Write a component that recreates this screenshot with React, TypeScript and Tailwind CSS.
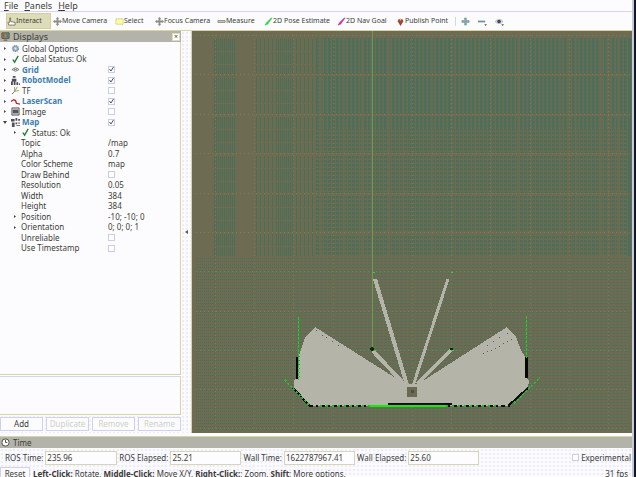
import type { ReactNode } from "react";

const xs = [215, 254, 293, 333, 412, 451, 490, 530, 569, 608];
const ys = [35, 74, 114, 153, 193, 232, 271, 311, 350, 389, 428];
const seams = [320, 343, 361, 388, 402, 431, 451, 474, 490, 517, 530, 559, 568, 575, 600, 608, 617];

function MapView() {
  return (
    <svg viewBox="192 31 440 402" preserveAspectRatio="xMidYMid slice" shapeRendering="crispEdges" className="absolute inset-0 h-full w-full" role="img" aria-label="Map view">
      <defs>
        <pattern id="fine" width="2" height="13" patternUnits="userSpaceOnUse"><path d="M0 0h1v12H0z" fill="#4b6e58" /></pattern>
        <pattern id="wide" width="4" height="13" patternUnits="userSpaceOnUse"><path d="M0 0h1v12H0z" fill="#45705a" /></pattern>
        <pattern id="dense" width="4" height="4" patternUnits="userSpaceOnUse"><path d="M0 0h2v4H0zM2 1h1v2H2z" fill="#4a6f5a" /></pattern>
        <pattern id="weave" width="4" height="4" patternUnits="userSpaceOnUse"><path d="M0 0h3v2H0zM0 2h1v1H0zM2 2h1v1H2z" fill="#4c6f5a" /></pattern>
        <pattern id="dots" width="2" height="3" patternUnits="userSpaceOnUse"><path d="M0 0h1v1H0z" fill="#45705a" /></pattern>
        <pattern id="dash" width="4" height="3" patternUnits="userSpaceOnUse"><path d="M0 0h3v1H0z" fill="#50705a" /></pattern>
      </defs>
      <path d="M192 31h440v402H192z" fill="#6d6b51" />
      <path d="M214 38h22v218h-22zM276 38h18v218h-18z" fill="url(#fine)" />
      <path d="M256 38h20v218h-20zM294 38h22v218h-22z" fill="url(#wide)" />
      <path d="M316 38h314v92H316z" fill="url(#dense)" />
      <path d="M316 130h314v126H316z" fill="url(#weave)" />
      <path d="M628 38h3v218h-3z" fill="#4a6f5a" />
      <path d="M196 256h100v175H196z" fill="url(#dots)" />
      <path d="M296 256h334v175H296z" fill="url(#dash)" />
      {seams.map((x) => <path key={x} d={`M${x} 38h2v218h-2z`} fill="#6d6b51" fillOpacity=".75" />)}
      {ys.slice(1, 6).map((y) => <path key={y} d={`M196 ${y}h434v2H196z`} fill="#6f6b51" />)}
      {xs.map((x) => <path key={x} d={`M${x + 0.5} 35V428`} stroke="#80824f" strokeOpacity=".7" strokeDasharray="1 3" />)}
      {ys.map((y) => <path key={y} d={`M196 ${y + 0.5}H628`} stroke="#7f8650" strokeOpacity=".8" strokeDasharray="1 3" />)}
      <path d="M372.500 31V350" stroke="#719a4c" />
      <path d="M315 327L305 337L301 350L299 356L298 378L294 380V388L309 406H508L528 388L529 380L526 378L525 357L521 350L516 337L507 327L418 384H405Z" fill="#b4b4a9" />
      <path d="M398 376L406 386H419L424 377L413 382Z" fill="#6d6b51" />
      <g stroke="#b4b4a9" fill="none">
        <path d="M375 279L407 385" strokeWidth="4" />
        <path d="M448 279L413 386" strokeWidth="3" />
        <path d="M373 351L404 384M451 350L417 384" strokeWidth="4" />
      </g>
      <path d="M400 384h25v4h-25z" fill="#b4b4a9" />
      <path d="M407 387h10v10h-10z" fill="#6b6a51" /><path d="M411 390h3v3h-3z" fill="#4d4d55" />
      <path d="M296 357h2v22h-2zM525 357h3v21h-3z" fill="#050805" />
      <path d="M298.500 317V380M526.500 316V358" stroke="#1bcf2a" strokeDasharray="3 1" />
      <path d="M299.500 320V378M525.500 322V356" stroke="#3a9440" strokeDasharray="1 3" />
      <path d="M293 388L310 406M508 406L528 388" stroke="#061006" strokeWidth="2" />
      <path d="M285 380L309 405M514 403L540 378" stroke="#20c432" strokeWidth="1.500" strokeDasharray="2 2" />
      <path d="M309 406H510" stroke="#071307" strokeWidth="2" strokeDasharray="4 3 2 3" />
      <path d="M320 406H500" stroke="#16bd20" strokeWidth="2" strokeDasharray="2 4" />
      <path d="M388 403h64v2h-64z" fill="#080a08" /><path d="M370 406h76" stroke="#05f500" strokeWidth="2" />
      <path d="M371 347h2v4h-2zM370 348h4v2h-4zM450 348h3v2h-3z" fill="#052d0c" />
      <path d="M373 272h2v1h-2zM451 272h2v1h-2zM451 350h3v1h-3zM374 350h2v1h-2z" fill="#35d43d" />
      <path d="M316 330.500h1M322 335.500h1M326 337.500h1M332 341.500h1M338 345.500h1M487 345.500h1M493 341.500h1M499 337.500h1M507 333.500h1M483 353.500h1M487 351.500h1M491 350.500h1M495 348.500h1M499 346.500h1M503 343.500h1M507 341.500h1M511 339.500h1" stroke="#5b5b70" />
    </svg>
  );
}

type IconName = "hand" | "move" | "select" | "ruler" | "green" | "pink" | "pin" | "gear" | "check" | "grid" | "robot" | "tf" | "laser" | "image" | "map" | "plus" | "minus" | "eye" | "screen" | "clock";
const art: Record<IconName, ReactNode> = {
  hand: <path d="M2 9L1 6h2V1h1v4l5 1v3z" fill="#fff" stroke="#77775f" />,
  move: <path d="M5 0L7 2H6V4H8V3l2 2-2 2V6H6v2h1L5 10 3 8h1V6H2v1L0 5l2-2v1h2V2H3z" fill="#8e8e84" />,
  select: <path d="M1 2h8v6H1z" fill="#ffff9a" stroke="#a9a96c" strokeDasharray="1 1" />,
  ruler: <path d="M1 4h8v2H1z" fill="#d9d9c4" stroke="#85857b" />,
  green: <path d="M1 9L3 6 8 1h1L4 8z" fill="#22e534" stroke="#32b942" strokeWidth=".5" />,
  pink: <path d="M1 9L3 6 8 1h1L4 8z" fill="#ea20b9" stroke="#9b3182" strokeWidth=".5" />,
  pin: <><path d="M5 10L2 5a3 3 0 1 1 6 0z" fill="#a34330" /><circle cx="5" cy="3" r="1" fill="#e4c3a8" /></>,
  gear: <><circle cx="5" cy="5" r="3" fill="#a3bacb" stroke="#7d98aa" strokeWidth="2" strokeDasharray="1.500 .5" /><circle cx="5" cy="5" r="1" fill="#e7eef4" /></>,
  check: <path d="M2 5l2 3 4-7" fill="none" stroke="#247d2d" strokeWidth="1.500" />,
  grid: <path d="M1 5l4-2 4 2-4 2zM3 4l4 2M7 4L3 6" fill="none" stroke="#77776f" />,
  robot: <path d="M2 0h3v2H2zM1 3h5v3H1zM0 6h2v4H0zM3 6h2v4H3zM6 7h2v3H6zM9 8h1v2H9z" fill="#4c4c55" />,
  tf: <><path d="M4 6V1M4 6l5-1" stroke="#a3a443" /><path d="M4 6L1 9" stroke="#b64040" /><path d="M4 6l3-5" stroke="#6f9863" /></>,
  laser: <path d="M0 5l3-2 2 1 1 3 4 1" fill="none" stroke="#bd2027" strokeWidth="1.500" />,
  image: <><path d="M1 1h8v8H1z" fill="#d2d2c4" stroke="#55554d" /><path d="M2 3h6v4H2z" fill="#54546a" /></>,
  map: <path d="M0 1h4v3H0zM5 0h2v3H5zM1 5h3v5H1zM5 5h2v2H5zM8 1h2v2H8zM6 8h4v1H6zM8 5h2v1H8z" fill="#50505a" />,
  plus: <path d="M4 1h2v3h3v2H6v3H4V6H1V4h3z" fill="#8cabb1" stroke="#5b7d85" strokeWidth=".5" />,
  minus: <><path d="M0 4h8v2H0z" fill="#6a979f" /><path d="M7 8h3L8.500 10z" fill="#55554d" /></>,
  eye: <><path d="M0 5q5-5 9 0q-4 5-9 0" fill="#d5d7e5" stroke="#9999aa" strokeWidth=".5" /><circle cx="4.500" cy="5" r="2" fill="#454556" /><path d="M7 8h3L8.500 10z" fill="#55554d" /></>,
  screen: <><path d="M1 1h8v6H1z" fill="#78a05a" stroke="#48483c" /><path d="M2 2h2v4H2z" fill="#c64b45" /><path d="M6 2h2v4H6z" fill="#596fae" /><path d="M3 9h4" stroke="#48483c" /></>,
  clock: <><circle cx="5" cy="5" r="4" fill="#fff" stroke="#45453f" /><path d="M5 2v3h2" fill="none" stroke="#45453f" /></>,
};
function Icon({ name }: { name: IconName }) {
  return <svg viewBox="0 0 10 10" className="size-[9px] shrink-0" aria-hidden="true">{art[name]}</svg>;
}

const tools: { icon: IconName; label: string; box: string }[] = [
  { icon: "hand", label: "Interact", box: "w-[45px]" },
  { icon: "move", label: "Move Camera", box: "w-[60px]" },
  { icon: "select", label: "Select", box: "w-[38px]" },
  { icon: "move", label: "Focus Camera", box: "w-[60px]" },
  { icon: "ruler", label: "Measure", box: "w-[45px]" },
  { icon: "green", label: "2D Pose Estimate", box: "w-[71px]" },
  { icon: "pink", label: "2D Nav Goal", box: "w-[57px]" },
  { icon: "pin", label: "Publish Point", box: "w-[57px]" },
];

type Row = { label: string; icon?: IconName; value?: string; check?: boolean; strong?: boolean; arrow?: "right" | "down"; child?: boolean };
const rows: Row[] = [
  { label: "Global Options", icon: "gear", arrow: "right" },
  { label: "Global Status: Ok", icon: "check", arrow: "right" },
  { label: "Grid", icon: "grid", arrow: "right", check: true, strong: true },
  { label: "RobotModel", icon: "robot", arrow: "right", check: true, strong: true },
  { label: "TF", icon: "tf", arrow: "right", check: false },
  { label: "LaserScan", icon: "laser", arrow: "right", check: true, strong: true },
  { label: "Image", icon: "image", arrow: "right", check: false },
  { label: "Map", icon: "map", arrow: "down", check: true, strong: true },
  { label: "Status: Ok", icon: "check", arrow: "right", child: true },
  { label: "Topic", value: "/map", child: true },
  { label: "Alpha", value: "0.7", child: true },
  { label: "Color Scheme", value: "map", child: true },
  { label: "Draw Behind", check: false, child: true },
  { label: "Resolution", value: "0.05", child: true },
  { label: "Width", value: "384", child: true },
  { label: "Height", value: "384", child: true },
  { label: "Position", value: "-10; -10; 0", arrow: "right", child: true },
  { label: "Orientation", value: "0; 0; 0; 1", arrow: "right", child: true },
  { label: "Unreliable", check: false, child: true },
  { label: "Use Timestamp", check: false, child: true },
];

function Tick({ label, on }: { label: string; on: boolean }) {
  return (
    <span className="relative grid size-[7px] shrink-0">
      <input id={label} type="checkbox" aria-label={label} defaultChecked={on} className="peer size-[7px] appearance-none border border-[#cbcbed] bg-white" />
      <svg viewBox="0 0 7 7" className="pointer-events-none absolute inset-0 hidden size-[7px] peer-checked:block" aria-hidden="true"><path d="M1.500 3l1.500 2 2.500-4" fill="none" stroke="#3e5a66" /></svg>
    </span>
  );
}

function PropertyRow({ row }: { row: Row }) {
  return (
    <li className="flex h-[11px] items-center even:h-[10px]">
      <div className={row.child ? "flex w-[108px] shrink-0 items-center pl-[12px]" : "flex w-[108px] shrink-0 items-center pl-[2px]"}>
        <span className="flex w-[9px] shrink-0 justify-start">
          {row.arrow && <svg viewBox="0 0 5 5" className="size-[5px]" aria-hidden="true"><path d={row.arrow === "down" ? "M1 1h4L3 4z" : "M2 1L4 2.500 2 4z"} fill="#44443d" /></svg>}
        </span>
        {row.icon && <span className="flex w-[11px] shrink-0"><Icon name={row.icon} /></span>}
        <span className={row.strong ? "font-bold text-[#3f80ad]" : ""}>{row.label}</span>
      </div>
      {row.value && <span>{row.value}</span>}
      {row.check !== undefined && <Tick label={row.label} on={row.check} />}
    </li>
  );
}

const times = [
  { label: "ROS Time:", value: "235.96", w: "w-[72px]" },
  { label: "ROS Elapsed:", value: "25.21", w: "w-[71px]" },
  { label: "Wall Time:", value: "1622787967.41", w: "w-[71px]" },
  { label: "Wall Elapsed:", value: "25.60", w: "w-[71px]" },
];
const dotted = "bg-[#fbfbff] bg-[radial-gradient(#ececfc_1px,transparent_1px)] bg-[size:4px_4px]";

export default function App() {
  return (
    <div className="flex h-screen overflow-hidden bg-[#fcfcff] font-['Noto_Sans',sans-serif] text-[8px] leading-[10px] whitespace-nowrap text-[#3c3c36]">
      <div className="flex min-w-0 flex-1 flex-col">
        <nav className="flex h-[12px] shrink-0 items-center gap-[6px] border-b border-[#d4d4fa] pl-[4px] text-[9px]">
          {["File", "Panels", "Help"].map((m) => <button key={m}><u>{m[0]}</u>{m.slice(1)}</button>)}
        </nav>
        <div className="flex h-[19px] shrink-0 items-center border-b border-[#d8d5a4] pl-[6px] text-[7px]">
          <div className="flex items-center gap-[2px]">
            {tools.map((t, i) => <button key={t.label} className={`${t.box} flex h-[16px] items-center ${i === 0 ? "border border-[#d3cf9c] bg-[#dedcb8]" : ""}`}><Icon name={t.icon} />{t.label}</button>)}
          </div>
          <div className="ml-[2px] flex items-center gap-[8px] border-l border-[#d5d5e8] pl-[5px]">
            <button aria-label="Add tool"><Icon name="plus" /></button>
            <button aria-label="Remove tool"><Icon name="minus" /></button>
            <button aria-label="Tool visibility"><Icon name="eye" /></button>
          </div>
        </div>
        <div className="flex min-h-0 flex-1">
          <aside className="flex w-[181px] shrink-0 flex-col">
            <header className="flex h-[11px] shrink-0 items-center gap-[3px] bg-[#b3b3a9] pr-[1px] pl-[1px] text-[9px]">
              <Icon name="screen" /><h2 className="flex-1">Displays</h2>
              <button aria-label="Close" className="grid size-[8px] place-items-center border border-[#dedcb8] bg-white text-[7px] leading-[6px]">×</button>
            </header>
            <ul className="min-h-0 flex-1 border-r border-b border-[#d8d5a4] pt-[1px]">{rows.map((r) => <PropertyRow key={r.label} row={r} />)}</ul>
            <div className="mt-[1px] h-[39px] shrink-0 border border-[#d8d5a4] border-t-[#d4d4fa] border-l-0" />
            <div className={`flex h-[18px] shrink-0 items-center gap-[3px] ${dotted}`}>
              {["Add", "Duplicate", "Remove", "Rename"].map((b, i) => <button key={b} disabled={i > 0} className="h-[14px] flex-1 border border-[#d0d0f0] bg-[#fcfcff] disabled:text-[#cfcfc4]">{b}</button>)}
            </div>
          </aside>
          <div className={`flex w-[11px] shrink-0 items-center justify-center border-r border-[#d8d5a4] ${dotted}`}><svg viewBox="0 0 4 6" className="w-[4px]" aria-hidden="true"><path d="M4 1v4L1 3z" fill="#55556a" /></svg></div>
          <main className="relative min-w-0 flex-1"><MapView /></main>
        </div>
        <section className={`mt-[3px] h-[41px] shrink-0 ${dotted}`}>
          <header className="flex h-[12px] items-center gap-[3px] border-t border-[#d8d5a4] bg-[#b3b3a9] pl-[1px]"><Icon name="clock" /><h2>Time</h2></header>
          <div className="flex h-[19px] items-center gap-[2px] pl-[5px]">
            {times.map((t) => <div key={t.label} className="flex items-center gap-[2px]"><label htmlFor={t.label}>{t.label}</label><input id={t.label} readOnly value={t.value} className={`${t.w} h-[14px] border border-[#d8d5b4] bg-[#fdfdff] px-[1px]`} /></div>)}
            <div className="ml-auto flex items-center gap-[2px] pr-[1px]"><Tick label="Experimental" on={false} /><label htmlFor="Experimental">Experimental</label></div>
          </div>
          <footer className="flex h-[13px] items-center gap-[3px]">
            <button className="h-[14px] w-[30px] shrink-0 border border-[#d0d0f0] bg-[#fcfcff]">Reset</button>
            <p><b>Left-Click:</b> Rotate. <b>Middle-Click:</b> Move X/Y. <b>Right-Click:</b>: Zoom. <b>Shift</b>: More options.</p>
            <span className="ml-auto pr-[4px]">31 fps</span>
          </footer>
        </section>
      </div>
      <div className="w-[4px] shrink-0 border-l-2 border-[#c9c8d5] bg-[#10182a]" />
    </div>
  );
}
